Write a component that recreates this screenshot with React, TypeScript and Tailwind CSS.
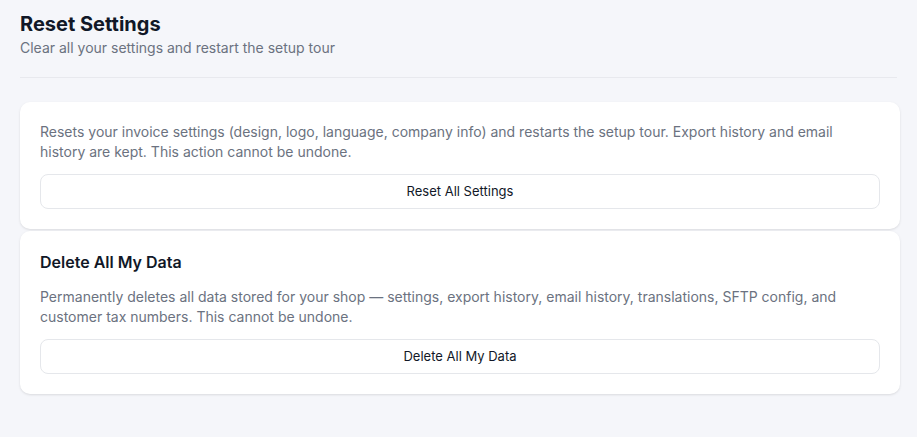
import React from "react";

function ActionCard({ title, text, button }: { title?: string; text: string; button: string }) {
  return (
    <div className="bg-white rounded-[10px] shadow-[0_1px_3px_rgba(0,0,0,0.08),0_1px_2px_rgba(0,0,0,0.04)] px-5 pt-5 pb-5 flex flex-col gap-3">
      {title && <h3 className="text-[16px] leading-6 font-semibold text-[#111827] -mt-[1px] mb-[1px]">{title}</h3>}
      <p className="text-[14px] leading-5 text-[#6b7280]">{text}</p>
      <button className="h-[35px] w-full rounded-lg border border-[#e5e7eb] bg-white text-[13px] text-[#111827]">
        {button}
      </button>
    </div>
  );
}

export default function App() {
  return (
    <div className="min-h-screen bg-[#f5f6fa] px-5 pt-[10px] pb-10" style={{ fontFamily: "Inter, 'Noto Sans', sans-serif" }}>
      <h1 className="text-[20px] leading-7 font-bold text-[#111827]">Reset Settings</h1>
      <p className="text-[14px] leading-5 text-[#6b7280]">Clear all your settings and restart the setup tour</p>
      <div className="mt-[19px] mb-[24px] h-px bg-[#e8e9ee]" />
      <div className="w-[880px] flex flex-col gap-[2px]">
        <ActionCard
          text="Resets your invoice settings (design, logo, language, company info) and restarts the setup tour. Export history and email history are kept. This action cannot be undone."
          button="Reset All Settings"
        />
        <ActionCard
          title="Delete All My Data"
          text="Permanently deletes all data stored for your shop — settings, export history, email history, translations, SFTP config, and customer tax numbers. This cannot be undone."
          button="Delete All My Data"
        />
      </div>
    </div>
  );
}
